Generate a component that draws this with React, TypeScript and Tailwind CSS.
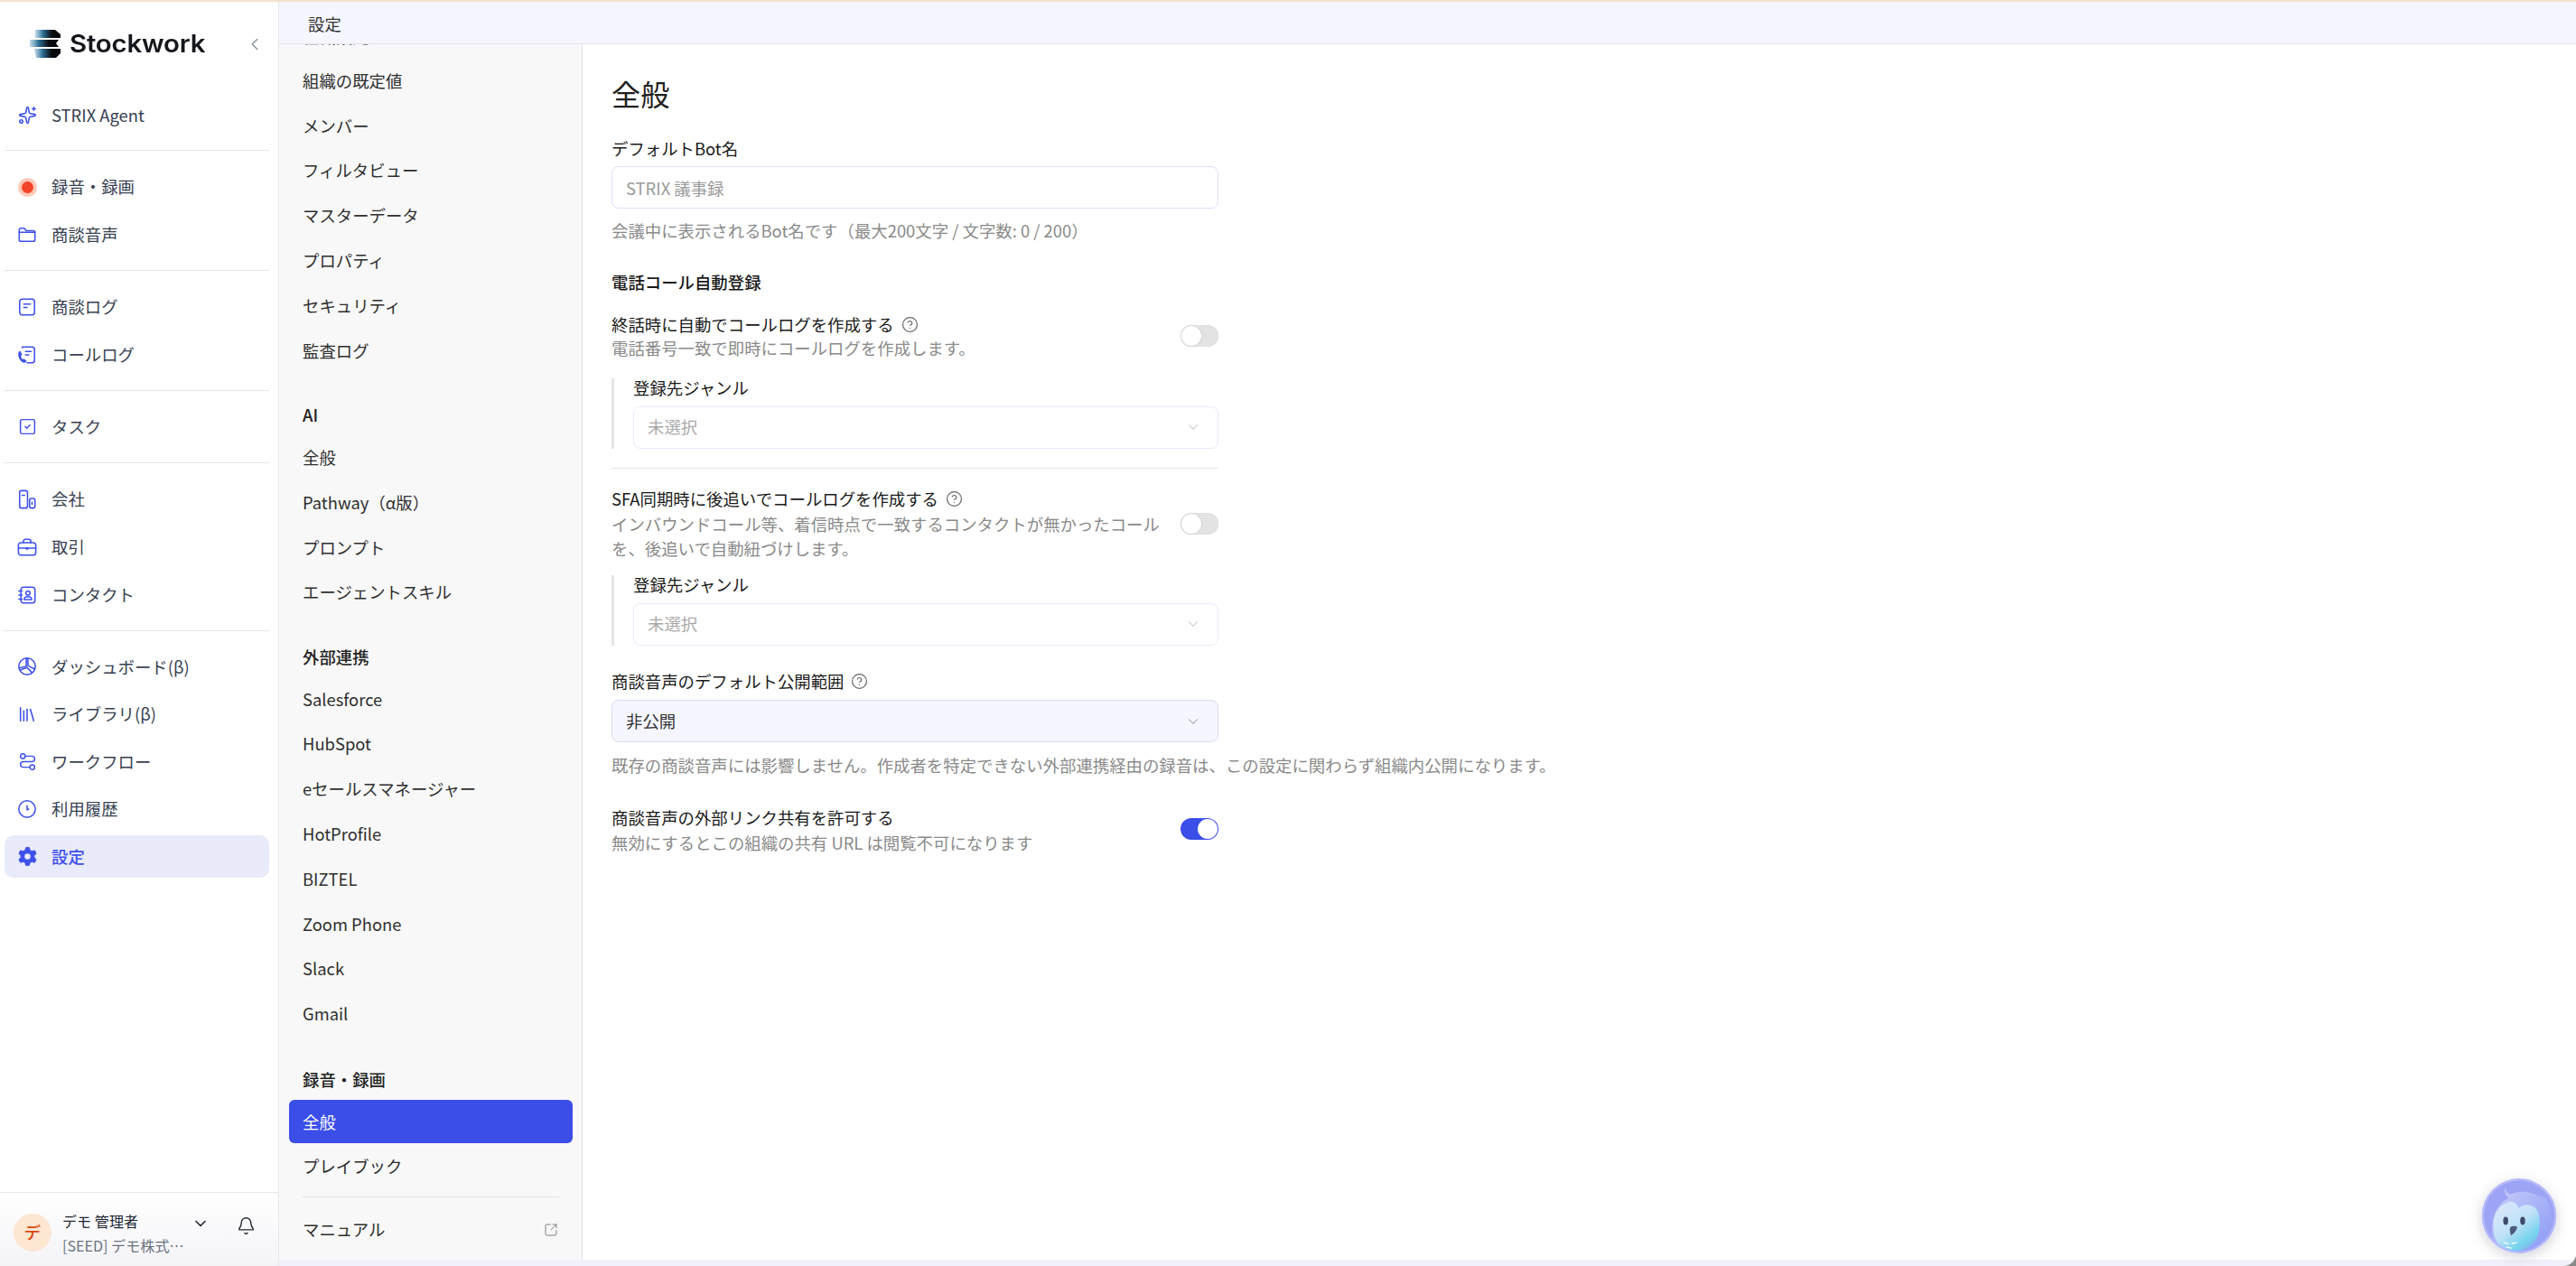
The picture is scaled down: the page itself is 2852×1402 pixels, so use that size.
import React from "react";
import {
  Bell,
  ChevronDown,
  ChevronLeft,
  CircleHelp,
  Library,
  Route,
  Sparkles,
  SquareArrowOutUpRight,
  SquareCheck,
} from "lucide-react";
import { FaGear } from "react-icons/fa6";

const Svg = ({ children }: { children: React.ReactNode }) => (
  <svg viewBox="0 0 24 24" className="w-[22px] h-[22px]" fill="none" stroke="currentColor" strokeWidth="1.7" strokeLinecap="round" strokeLinejoin="round">
    {children}
  </svg>
);

const RecordIcon = () => (
  <div className="w-[21px] h-[21px] rounded-full bg-[#fdc9b8] flex items-center justify-center">
    <div className="w-[13px] h-[13px] rounded-full bg-[#f4442a]" />
  </div>
);
const FolderIcon = () => (
  <Svg>
    <path d="M2.5 6a2 2 0 0 1 2-2h4l2.5 3h8.500a2 2 0 0 1 2 2v9a2 2 0 0 1-2 2h-15a2 2 0 0 1-2-2z" />
    <path d="M2.500 9h19" />
  </Svg>
);
const LogIcon = () => (
  <Svg>
    <rect x="3" y="2.500" width="18" height="19" rx="3" />
    <path d="M8 8.500h8M8 12.500h4" />
  </Svg>
);
const CallLogIcon = () => (
  <Svg>
    <path d="M6 3.200A3 3 0 0 1 7 2.500h11a3 3 0 0 1 3 3v13a3 3 0 0 1-3 3h-6" />
    <path d="M10 8h7M10 12h4" />
    <path d="M3.500 7C1.500 8 1 10 1.500 13c.5 3.500 3.500 8 7 8.500 1.500 0 2.500-1 3-2.200l-3.300-2.800-1.700 1c-1-1-1.700-2.700-2-4.500l1.700-1.200z" fill="currentColor" stroke="none" />
  </Svg>
);
const CompanyIcon = () => (
  <Svg>
    <rect x="3" y="1.500" width="9.500" height="21" rx="2" />
    <rect x="15" y="11" width="6.500" height="11.500" rx="2" />
    <path d="M6 7h3M18 15.500v2.500" />
  </Svg>
);
const BriefcaseIcon = () => (
  <Svg>
    <rect x="1.500" y="6.500" width="21" height="15" rx="3" />
    <path d="M7.500 6.500V5a2.500 2.500 0 0 1 2.500-2.500h4A2.500 2.500 0 0 1 16.500 5v1.500M1.500 13h21" />
    <rect x="10.500" y="12" width="3" height="3" fill="currentColor" stroke="none" />
  </Svg>
);
const ContactIcon = () => (
  <Svg>
    <rect x="4.500" y="2.500" width="17" height="19" rx="3" />
    <path d="M2 7h4M2 12h4M2 17h4" />
    <circle cx="13" cy="9.500" r="2.500" />
    <path d="M8.500 17.500c0-2.500 1.800-3.500 4.500-3.500s4.500 1 4.500 3.500z" />
  </Svg>
);
const PieIcon = () => (
  <Svg>
    <circle cx="12" cy="12" r="10" />
    <path d="M13 2.500V11l8 4M11 2.500V12l-8.500 2M4.500 16l7.500-2.500 6 6" />
  </Svg>
);
const ClockIcon = () => (
  <Svg>
    <circle cx="12" cy="12" r="10" />
    <path d="M12 8v5l2-1" />
  </Svg>
);

const blue = "text-[#3f51ea]";

type Item = { label: string; icon: React.ReactNode; active?: boolean };

const mainNav: Item[][] = [
  [{ label: "STRIX Agent", icon: <Sparkles size={21} strokeWidth={1.8} /> }],
  [
    { label: "録音・録画", icon: <RecordIcon /> },
    { label: "商談音声", icon: <FolderIcon /> },
  ],
  [
    { label: "商談ログ", icon: <LogIcon /> },
    { label: "コールログ", icon: <CallLogIcon /> },
  ],
  [{ label: "タスク", icon: <SquareCheck size={21} strokeWidth={1.7} /> }],
  [
    { label: "会社", icon: <CompanyIcon /> },
    { label: "取引", icon: <BriefcaseIcon /> },
    { label: "コンタクト", icon: <ContactIcon /> },
  ],
  [
    { label: "ダッシュボード(β)", icon: <PieIcon /> },
    { label: "ライブラリ(β)", icon: <Library size={22} strokeWidth={1.7} /> },
    { label: "ワークフロー", icon: <Route size={21} strokeWidth={1.7} className="-scale-y-100" /> },
    { label: "利用履歴", icon: <ClockIcon /> },
    { label: "設定", icon: <FaGear size={21} />, active: true },
  ],
];

const settingsNav: { title?: string; items: string[] }[] = [
  { items: ["組織設定", "組織の既定値", "メンバー", "フィルタビュー", "マスターデータ", "プロパティ", "セキュリティ", "監査ログ"] },
  { title: "AI", items: ["全般", "Pathway（α版）", "プロンプト", "エージェントスキル"] },
  { title: "外部連携", items: ["Salesforce", "HubSpot", "eセールスマネージャー", "HotProfile", "BIZTEL", "Zoom Phone", "Slack", "Gmail"] },
];

const Logo = () => (
  <div className="flex items-center gap-[9px]">
    <svg width="35" height="33" viewBox="0 0 35 33" className="blur-[0.7px]">
      <defs>
        <linearGradient id="bar" x1="0" x2="1" y1="0" y2="0">
          <stop offset="0" stopColor="#7fb2cf" stopOpacity="0.5" />
          <stop offset="0.3" stopColor="#2f7298" />
          <stop offset="0.65" stopColor="#0a0d12" />
          <stop offset="1" stopColor="#05060a" />
        </linearGradient>
      </defs>
      <path d="M6 1h22l6 5v4H6z" fill="url(#bar)" />
      <path d="M0 12h32l-3 4 3 4H0z" fill="url(#bar)" />
      <path d="M5 22h29v5l-5 5H7z" fill="url(#bar)" />
    </svg>
    <span className="font-['Inter'] font-semibold text-[27px] leading-none text-[#15171c] tracking-[-0.2px] origin-left scale-x-[1.09] blur-[0.3px]">Stockwork</span>
  </div>
);

const Toggle = ({ on, className }: { on?: boolean; className: string }) => (
  <div className={`w-[42px] h-[24px] rounded-full shrink-0 p-[1px] flex ${className} ${on ? "bg-[#3b4ee8] justify-end" : "bg-[#e3e3e3] justify-start shadow-[inset_0_0_1px_#ccc]"}`}>
    <div className={`w-[22px] h-[22px] rounded-full bg-white ${on ? "" : "shadow-[0_0_2px_#bbb]"}`} />
  </div>
);

const Help = () => <CircleHelp size={19} strokeWidth={1.5} className="text-[#666]" />;

const GenreSelect = () => (
  <div className="border-l-[3px] border-[#e4e4e8] pl-[21px]">
    <div className="leading-[20px] text-[#1a1a1a] mb-[11px]">登録先ジャンル</div>
    <div className="h-[47px] border border-[#e9ebfa] rounded-[8px] bg-white flex items-center justify-between pl-[15px] pr-[18px]">
      <span className="text-[#aaaaaa]">未選択</span>
      <ChevronDown size={18} strokeWidth={1.4} className="text-[#c0c0c6]" />
    </div>
  </div>
);

const Owl = () => (
  <div className="absolute left-[2747px] top-[1305px] w-[84px] h-[83px] rounded-full shadow-[0_4px_14px_rgba(90,90,120,0.25)]">
    <svg viewBox="0 0 84 84" className="w-full h-full">
      <defs>
        <clipPath id="owlClip">
          <circle cx="42" cy="42" r="39.500" />
        </clipPath>
        <linearGradient id="owlBody" x1="0.15" y1="0.1" x2="0.8" y2="1">
          <stop offset="0" stopColor="#d9e6fb" />
          <stop offset="0.45" stopColor="#bfe2f8" />
          <stop offset="0.8" stopColor="#74d3ec" />
          <stop offset="1" stopColor="#8fa6f7" />
        </linearGradient>
        <linearGradient id="owlHead" x1="0" y1="0" x2="1" y2="1">
          <stop offset="0" stopColor="#c9cff9" />
          <stop offset="1" stopColor="#8c9bf6" />
        </linearGradient>
      </defs>
      <circle cx="42" cy="42" r="42" fill="#b6baf8" />
      <circle cx="42" cy="42" r="39.500" fill="#9ea4f5" />
      <g clipPath="url(#owlClip)">
        <path d="M4 68l5-4 2 20H4z" fill="#5a6488" />
        <path d="M30 22c-3-3-5-8-4-12 1 4 3 6 6 8 6-3 14-4 22-2 7 2 13 6 18 6 4 8 6 16 5 28-2 16-10 30-30 30H30C16 80 10 70 12 52c1-14 8-25 18-30z" fill="url(#owlHead)" />
        <path d="M13 52c0-14 9-24 19-26 5 0 8 3 10 7 3-3 8-4 13-3 7 2 10 8 10 20 0 20-10 32-32 32-12 0-20-12-20-30z" fill="url(#owlBody)" />
        <ellipse cx="27" cy="47.500" rx="2.800" ry="4.500" fill="#3f4a6b" />
        <ellipse cx="46" cy="47.500" rx="2.800" ry="4.500" fill="#3f4a6b" />
        <path d="M32 55c2-2 7-2 8 0-1 4-4 7-7 9-1-3-2-6-1-9z" fill="#4f5b7d" />
        <path d="M25 72l5 1.500M34 73l5-1M28 77l5 1" stroke="#ffffff" strokeWidth="1.300" strokeLinecap="round" fill="none" />
      </g>
    </svg>
  </div>
);

export default function App() {
  return (
    <div className="relative w-screen h-screen overflow-hidden bg-[#8a8a8a] font-['Noto_Sans_CJK_JP','Noto_Sans',sans-serif] text-[18.4px]">
      <div className="h-[2px] bg-[#f0e4cf]" />
      <div className="flex h-[1400px]">
        {/* Left nav */}
        <aside className="w-[309px] shrink-0 bg-white border-r border-[#e8e8ea] flex flex-col">
          <div className="h-[102px] shrink-0 pt-[30px] pl-[33px] pr-[15px] flex items-start justify-between">
            <Logo />
            <ChevronLeft size={22} strokeWidth={1.6} className="text-[#8b93a3] mt-[6px]" />
          </div>
          <nav className="flex-1 pl-[5px] pr-[10px]">
            {mainNav.map((group, i) => (
              <div key={i}>
                {i > 0 && <div className="h-px bg-[#e6e6ea] mt-[15.400px] mb-[16.400px]" />}
                <div className={`flex flex-col ${i === 5 ? "gap-[5.500px]" : "gap-[6px]"}`}>
                  {group.map((it) => (
                    <div
                      key={it.label}
                      className={`h-[47px] rounded-[10px] flex items-center pl-[14px] ${it.active ? "bg-[#e9ebfb] text-[#3f51ea] font-medium" : "text-[#374151]"}`}
                    >
                      <span className={`w-[22px] h-[22px] flex items-center justify-center shrink-0 ${blue}`}>{it.icon}</span>
                      <span className="ml-[16px] whitespace-nowrap">{it.label}</span>
                    </div>
                  ))}
                </div>
              </div>
            ))}
          </nav>
          <div className="h-[82px] shrink-0 border-t border-[#e6e6ea] bg-linear-to-b from-white to-[#f4f4f8] flex items-start pl-[15px] pt-[23px]">
            <div className="w-[42px] h-[42px] rounded-full bg-[#fde6d2] text-[#d9480f] font-medium flex items-center justify-center">デ</div>
            <div className="ml-[12px] w-[140px] -mt-[4px]">
              <div className="text-[16.100px] leading-[24px] text-[#222833]">デモ 管理者</div>
              <div className="text-[16.100px] leading-[26px] mt-[2px] text-[#6b7280] truncate whitespace-nowrap">[SEED] デモ株式会社</div>
            </div>
            <ChevronDown size={20} strokeWidth={2} className="text-[#222833] ml-[3px] mt-[1px]" />
            <Bell size={21} strokeWidth={1.6} className="text-[#222833] ml-[30px] mt-[3px]" />
          </div>
        </aside>

        {/* Right column */}
        <div className="flex-1 min-w-0 flex flex-col bg-[#f1f1fb] rounded-br-[14px] overflow-hidden">
          <div className="h-[47px] shrink-0 bg-[#f5f6ff] border-b border-[#e4e4ee] flex items-center pl-[32px] pt-[3px] text-[#333] z-10">設定</div>
          <div className="h-[1346px] shrink-0 flex">
            {/* Settings nav */}
            <div className="w-[336px] shrink-0 bg-[#f8f8f8] border-r border-[#e4e4e6] overflow-hidden pl-[11px] pr-[10px] flex flex-col text-[#2f2f2f]">
              <div className="-mt-[32px]">
                {settingsNav.map((g) => (
                  <div key={g.items[0]} className={g.title ? "mt-[24.500px]" : ""}>
                    {g.title && <div className="h-[44px] flex items-center pl-[15px] font-medium text-[#222]">{g.title}</div>}
                    {g.items.map((t) => (
                      <div key={t} className={`flex items-center pl-[15px] whitespace-nowrap ${t === "組織設定" ? "h-[47.800px]" : "h-[49.800px]"}`}>{t}</div>
                    ))}
                  </div>
                ))}
                <div className="mt-[25.500px] h-[45px] flex items-center pl-[15px] font-medium text-[#222]">録音・録画</div>
                <div className="h-[48px] rounded-[6px] bg-[#3b4ee8] text-white flex items-center pl-[15px]">全般</div>
                <div className="h-[49.800px] flex items-center pl-[15px]">プレイブック</div>
                <div className="h-px bg-[#e2e2e4] mx-[15px] mt-[9px]" />
                <div className="h-[49.800px] mt-[11px] flex items-center justify-between pl-[15px] pr-[16px]">
                  <span>マニュアル</span>
                  <SquareArrowOutUpRight size={16} strokeWidth={1.4} className="text-[#777]" />
                </div>
              </div>
            </div>

            {/* Main */}
            <main className="flex-1 min-w-0 bg-white pl-[32px] pt-[30px]">
              <div className="w-[672px]">
                <h1 className="text-[32.200px] leading-[48px] text-[#1f1f1f]">全般</h1>

                <div className="mt-[23.500px] leading-[27px] text-[#1a1a1a]">デフォルトBot名</div>
                <input
                  placeholder="STRIX 議事録"
                  className="mt-[6.500px] w-full h-[47px] border border-[#dcdffb] rounded-[8px] px-[15px] outline-none placeholder:text-[#9a9a9a]"
                />
                <div className="mt-[10.500px] leading-[27px] text-[#8a8a8a]">会議中に表示されるBot名です（最大200文字 / 文字数: 0 / 200）</div>

                <div className="mt-[30px] leading-[27px] font-medium text-[#1a1a1a]">電話コール自動登録</div>

                <div className="mt-[21px] flex items-center justify-between gap-[16px]">
                  <div>
                    <div className="flex items-center gap-[8px] leading-[25px] text-[#1a1a1a]">
                      終話時に自動でコールログを作成する
                      <Help />
                    </div>
                    <div className="leading-[27px] text-[#8a8a8a]">電話番号一致で即時にコールログを作成します。</div>
                  </div>
                  <Toggle className="-mt-[2px]" />
                </div>
                <div className="mt-[20px]"><GenreSelect /></div>

                <div className="h-px bg-[#e4e4e8] mt-[21px]" />

                <div className="mt-[21.500px] flex items-center justify-between gap-[16px]">
                  <div>
                    <div className="flex items-center gap-[8px] leading-[25px] text-[#1a1a1a]">
                      SFA同期時に後追いでコールログを作成する
                      <Help />
                    </div>
                    <div className="mt-[2px] leading-[27px] text-[#8a8a8a]">インバウンドコール等、着信時点で一致するコンタクトが無かったコールを、後追いで自動紐づけします。</div>
                  </div>
                  <Toggle className="-mt-[2px]" />
                </div>
                <div className="mt-[15.500px]"><GenreSelect /></div>

                <div className="mt-[27.500px] flex items-center gap-[8px] leading-[25px] text-[#1a1a1a]">
                  商談音声のデフォルト公開範囲
                  <Help />
                </div>
                <div className="mt-[8.300px] h-[47px] border border-[#d9dcf6] rounded-[8px] bg-[#f5f6ff] flex items-center justify-between pl-[15px] pr-[18px] text-[#333]">
                  <span>非公開</span>
                  <ChevronDown size={18} strokeWidth={1.4} className="text-[#9a9aa4]" />
                </div>
                <div className="mt-[11.500px] leading-[27px] text-[#8a8a8a] whitespace-nowrap">既存の商談音声には影響しません。作成者を特定できない外部連携経由の録音は、この設定に関わらず組織内公開になります。</div>

                <div className="mt-[32px] flex items-center justify-between">
                  <div>
                    <div className="leading-[25px] text-[#1a1a1a]">商談音声の外部リンク共有を許可する</div>
                    <div className="mt-[2px] leading-[27px] text-[#8a8a8a]">無効にするとこの組織の共有 URL は閲覧不可になります</div>
                  </div>
                  <Toggle on className="-mt-[4px]" />
                </div>
              </div>
            </main>
          </div>
        </div>
      </div>
      <Owl />
    </div>
  );
}
